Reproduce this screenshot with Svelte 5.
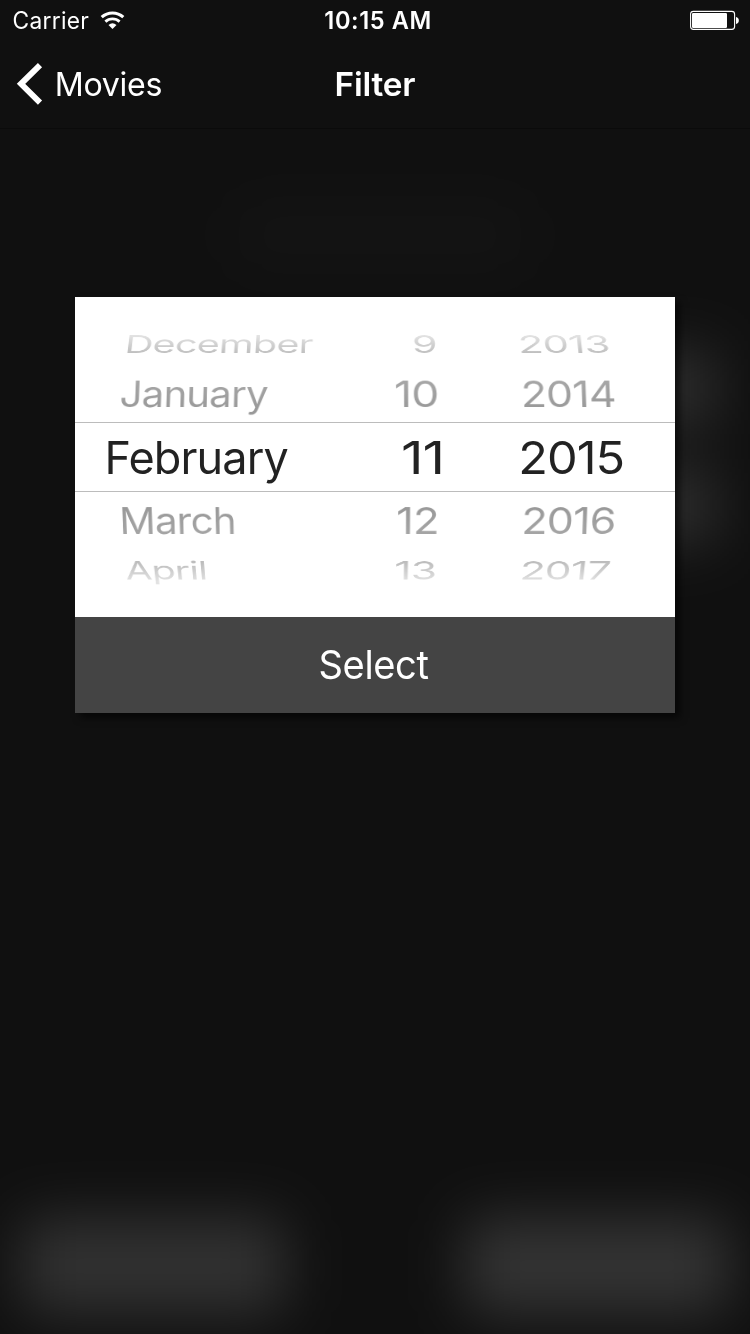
<script>
  const family = 'Inter, "Liberation Sans", sans-serif';
  const axis = 375;

  // cap: capital height in px, base: baseline inside the row, lean: slant per px from the wheel axis
  const rows = [
    { height: 69, base: 56.4, cap: 17.8, lean: -0.0005, from: '#e2e2e2', to: '#bcbcbc', cells: [['December', 126.5, 312.5], ['9', 414, 436], ['2013', 521.5, 609.5]] },
    { height: 56, base: 41.8, cap: 26.4, lean: -0.00016, from: '#a6a6a6', to: '#999999', cells: [['January', 121, 268], ['10', 396, 437], ['2014', 524, 615]] },
    { height: 70, base: 52, cap: 32.7, lean: 0, from: '#222222', to: '#222222', selected: true, cells: [['February', 107.5, 288.5], ['11', 403.5, 441], ['2015', 521.5, 622.5]] },
    { height: 56, base: 42.6, cap: 26.4, lean: 0.00016, from: '#999999', to: '#a6a6a6', cells: [['March', 122.5, 234.5], ['12', 398, 437], ['2016', 524, 614]] },
    { height: 69, base: 32, cap: 18, lean: 0.0005, from: '#bcbcbc', to: '#e2e2e2', cells: [['April', 127, 206], ['13', 396, 435], ['2017', 522, 608.5]] }
  ];
  const columns = [75, 363, 490];

  // Scales a label so that its ink spans the given width, with an optional wheel slant.
  function fit(node, o) {
    const size = o.size ?? 45;
    const ctx = document.createElement('canvas').getContext('2d');
    ctx.font = `${o.weight ?? 400} ${size}px ${family}`;
    ctx.letterSpacing = `${o.spacing ?? 0}px`;
    const m = ctx.measureText(o.text);
    const ink = m.actualBoundingBoxRight + m.actualBoundingBoxLeft;
    const sx = (o.right - o.left) / ink;
    const lean = o.lean ?? 0;
    const sy = o.cap ? o.cap / (size * 0.727) : 1;
    const b = (axis - o.left) * lean * sy;
    const h = lean * sy;
    const tx = o.left - o.origin + m.actualBoundingBoxLeft * sx;
    node.style.fontSize = `${size}px`;
    node.style.letterSpacing = `${o.spacing ?? 0}px`;
    const ascent = node.offsetHeight / 2 + size * 0.3636;
    node.style.transformOrigin = `0 ${ascent}px`;
    node.style.transform =
      `translate(${tx}px, ${o.base - ascent}px) matrix3d(${sx},0,0,0,${b},${sy},0,${h},0,0,1,0,0,0,0,1)`;
  }
</script>

<div class="screen">
  <div class="backdrop">
    <div class="glow top"></div>
    <div class="glow side one"></div>
    <div class="glow side two"></div>
    <div class="glow foot left"></div>
    <div class="glow foot right"></div>
  </div>

  <header>
    <div class="status">
      <div class="carrier">
        <span class="label" use:fit={{ text: 'Carrier', size: 23.6, left: 13.5, right: 89, origin: 0, base: 30, spacing: 0.3 }}>Carrier</span>
      </div>
      <svg class="wifi" width="26" height="20" viewBox="0 0 26 20">
        <path d="M1.7 7.2A16 16 0 0 1 23.3 7.2" fill="none" stroke="#fff" stroke-width="3.1" />
        <path d="M5.4 11.6A10.5 10.5 0 0 1 19.6 11.6" fill="none" stroke="#fff" stroke-width="2.8" />
        <path d="M8.5 14.9A6.5 6.5 0 0 1 16.5 14.9L12.5 19Z" fill="#fff" />
      </svg>
      <div class="time">
        <span class="label time-text" use:fit={{ text: '10:15 AM', size: 23.6, weight: 560, left: 325.3, right: 430.5, origin: 300, base: 30, spacing: 0.6 }}>10:15 AM</span>
      </div>
      <svg class="battery" width="50" height="20" viewBox="0 0 50 20">
        <rect x="0.6" y="1.4" width="44" height="18" rx="2.8" fill="none" stroke="#fff" stroke-width="1.1" />
        <rect x="2" y="2.9" width="35" height="15" rx="1.2" fill="#fff" />
        <path d="M46 7C49.8 7.5 49.8 13.5 46 14Z" fill="#fff" />
      </svg>
    </div>
    <div class="nav">
      <div class="back">
        <svg width="44" height="60" viewBox="0 0 44 60">
          <path d="M40 11.2 L21 29.8 L40 48.6" fill="none" stroke="#fff" stroke-width="5.9" />
        </svg>
        <span class="label" use:fit={{ text: 'Movies', size: 33.2, left: 56.7, right: 161, origin: 44, base: 56.3, spacing: -0.3 }}>Movies</span>
      </div>
      <div class="title">
        <span class="label title-text" use:fit={{ text: 'Filter', size: 33.2, weight: 600, left: 336.5, right: 415.3, origin: 300, base: 56.3, spacing: -0.2 }}>Filter</span>
      </div>
    </div>
  </header>

  <main>
    <div class="picker">
      {#each rows as row}
        <div class="row" class:selected={row.selected} style="height: {row.height}px">
          {#each row.cells as [text, left, right], i}
            <div class="cell">
              <span
                class="label ink"
                style="background-image: linear-gradient({row.from} 22%, {row.to} 82%)"
                use:fit={{ text, left, right, origin: columns[i], base: row.base, cap: row.cap, lean: row.lean, spacing: -0.9 }}
              >{text}</span>
            </div>
          {/each}
        </div>
      {/each}
    </div>
    <button>
      <span class="label" use:fit={{ text: 'Select', size: 39.5, left: 320.5, right: 429, origin: 75, base: 62.8, spacing: -0.4 }}>Select</span>
    </button>
  </main>
</div>

<style>
  :global(body) {
    margin: 0;
    background: #101010;
  }
  .screen {
    position: relative;
    width: 750px;
    height: 1334px;
    overflow: hidden;
    background: #101010;
    color: #fff;
    font-family: Inter, 'Liberation Sans', sans-serif;
  }
  .label {
    display: block;
    width: max-content;
    line-height: 1.3;
    white-space: nowrap;
    font-weight: 400;
  }
  .time-text {
    font-weight: 560;
  }
  .title-text {
    font-weight: 600;
  }
  header {
    position: relative;
    box-sizing: border-box;
    height: 129px;
    border-bottom: 1px solid #0b0b0b;
  }
  .status {
    display: grid;
    grid-template-columns: 100px 200px 390px 60px;
    height: 40px;
  }
  .wifi,
  .battery {
    margin-top: 10px;
  }
  .nav {
    display: grid;
    grid-template-columns: 300px 450px;
    height: 88px;
  }
  .back {
    display: flex;
    align-items: flex-start;
  }
  .back svg {
    margin-top: 14px;
  }
  main {
    position: relative;
    width: 600px;
    margin: 168px 0 0 75px;
    box-shadow: 5px 5px 7px rgba(0, 0, 0, 0.6);
  }
  .picker {
    height: 320px;
    background: #fff;
  }
  .row {
    display: grid;
    grid-template-columns: 288px 127px 185px;
    box-sizing: border-box;
  }
  .row.selected {
    border: solid #bcbcbc;
    border-width: 1px 0;
  }
  .cell {
    min-width: 0;
    height: 0;
  }
  .ink {
    color: transparent;
    background-clip: text;
    -webkit-background-clip: text;
  }
  button {
    display: block;
    width: 100%;
    height: 96px;
    padding: 0;
    border: 0;
    background: #444;
    color: #fff;
    font: inherit;
    text-align: left;
  }
  button .label {
    height: 96px;
    line-height: 96px;
  }
  .backdrop {
    position: absolute;
    inset: 0;
    background: #101010;
    box-shadow: 0 0 0 120px #101010;
    filter: blur(28px);
  }
  .glow {
    position: absolute;
  }
  .top {
    left: 230px;
    top: 205px;
    width: 300px;
    height: 60px;
    border-radius: 30px;
    background: #141414;
  }
  .side {
    left: 560px;
    width: 156px;
    height: 76px;
    background: #2e2e2e;
  }
  .one {
    top: 350px;
  }
  .two {
    top: 467px;
  }
  .foot {
    top: 1217px;
    height: 98px;
    border-radius: 20px;
    background: #313131;
  }
  .left {
    left: 20px;
    width: 266px;
  }
  .right {
    left: 464px;
    width: 266px;
    background: #333;
  }
</style>
